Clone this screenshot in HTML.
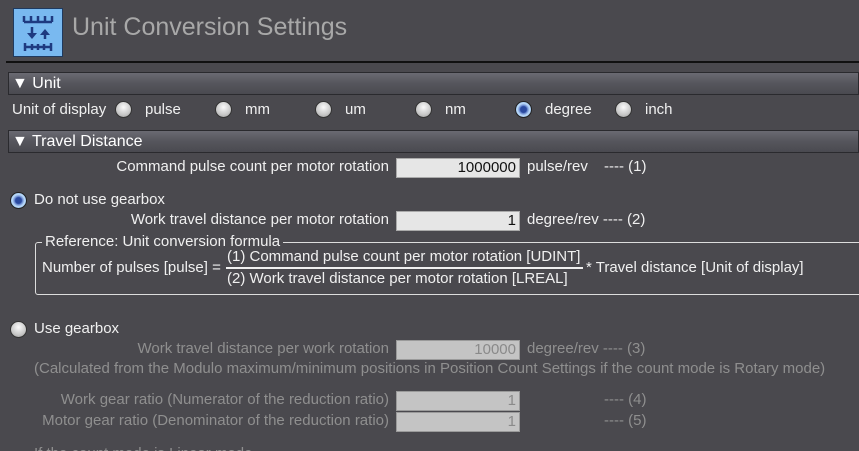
<!DOCTYPE html>
<html><head><meta charset="utf-8"><style>
*{margin:0;padding:0;box-sizing:border-box}
html,body{width:859px;height:451px;overflow:hidden}
body{background:#4a494e;font-family:"Liberation Sans",sans-serif;font-size:15px;color:#f0f0f0;position:relative}
.a{position:absolute;white-space:nowrap;line-height:18px}
.r{text-align:right}
.bar{position:absolute;left:8px;right:0;height:23px;background:linear-gradient(#6a6a72,#55555c 50%,#4a4a50);border:1px solid #2a2a2e;font-size:16px;line-height:21px;padding-left:3px;color:#fff}
.rad{position:absolute;width:17px;height:17px;border-radius:50%;background:radial-gradient(circle at 50% 35%,#fafafa,#c8c8c8 60%,#9a9a9a);border:1px solid #333}
.sel{background:radial-gradient(circle,#2a4aa0 0 3px,#6a8ad0 4px,#b8d8f8 6px,#90b8e8);border:1px solid #222}
.inp{position:absolute;left:396px;width:124px;height:20px;background:#e6e6e6;border:1px solid #aaa;text-align:right;padding-right:3px;color:#111;line-height:18px}
.dis{background:#c4c4c4;color:#8a8a8a;border-color:#9a9a9a}
.g{color:#8f8f8f}
</style></head><body>
<div style="position:absolute;left:13px;top:8px;width:50px;height:49px;background:#79b9f0;border:1px solid #1e3a60">
<svg width="48" height="47" viewBox="0 0 48 47"><g stroke="#1e3a80" stroke-width="2.5" fill="none">
<path d="M10 7v6M17 7v6M24 7v6M31 7v6M38 7v6M10 13h28"/>
<path d="M18 18v8M31 22v8M11 38h26M11 34v8M18 35v6M24 35v6M30 35v6M37 34v8"/></g>
<path d="M13 24h10l-5 6z M26 26l5-6 5 6z" fill="#1e3a80"/></svg></div>
<div class="a" style="left:72px;top:12px;font-size:25px;line-height:30px;color:#a8a8a8">Unit Conversion Settings</div>
<div style="position:absolute;left:6px;right:0;top:61px;height:2px;background:#111"></div>
<div class="bar" style="top:72px">▼ Unit</div>
<div class="a" style="left:12px;top:101px">Unit of display</div>
<div class="rad" style="left:115px;top:101px"></div><div class="a" style="left:145px;top:101px">pulse</div>
<div class="rad" style="left:215px;top:101px"></div><div class="a" style="left:245px;top:101px">mm</div>
<div class="rad" style="left:315px;top:101px"></div><div class="a" style="left:345px;top:101px">um</div>
<div class="rad" style="left:415px;top:101px"></div><div class="a" style="left:445px;top:101px">nm</div>
<div class="rad sel" style="left:515px;top:101px"></div><div class="a" style="left:545px;top:101px">degree</div>
<div class="rad" style="left:615px;top:101px"></div><div class="a" style="left:645px;top:101px">inch</div>
<div class="bar" style="top:130px">▼ Travel Distance</div>
<div class="a r" style="right:470px;top:158px">Command pulse count per motor rotation</div>
<div class="inp" style="top:158px">1000000</div>
<div class="a" style="left:527px;top:158px">pulse/rev</div><div class="a" style="left:604px;top:158px">---- (1)</div>
<div class="rad sel" style="left:10px;top:192px"></div><div class="a" style="left:34px;top:191px">Do not use gearbox</div>
<div class="a r" style="right:470px;top:211px">Work travel distance per motor rotation</div>
<div class="inp" style="top:211px">1</div>
<div class="a" style="left:527px;top:211px">degree/rev ---- (2)</div>
<div style="position:absolute;left:35px;top:242px;right:-5px;height:53px;border:1px solid #ddd;border-radius:3px"></div>
<div class="a" style="left:42px;top:233px;background:#4a494e;padding:0 3px">Reference: Unit conversion formula</div>
<div class="a" style="left:42px;top:259px">Number of pulses [pulse] =</div>
<div class="a" style="left:227px;top:248px">(1) Command pulse count per motor rotation [UDINT]</div>
<div style="position:absolute;left:226px;top:267px;width:357px;height:2px;background:#f0f0f0"></div>
<div class="a" style="left:227px;top:270px">(2) Work travel distance per motor rotation [LREAL]</div>
<div class="a" style="left:586px;top:259px">* Travel distance [Unit of display]</div>
<div class="rad" style="left:10px;top:321px"></div><div class="a" style="left:34px;top:320px">Use gearbox</div>
<div class="a r g" style="right:470px;top:340px">Work travel distance per work rotation</div>
<div class="inp dis" style="top:340px">10000</div>
<div class="a g" style="left:527px;top:340px">degree/rev ---- (3)</div>
<div class="a g" style="left:34px;top:360px">(Calculated from the Modulo maximum/minimum positions in Position Count Settings if the count mode is Rotary mode)</div>
<div class="a r g" style="right:470px;top:391px">Work gear ratio (Numerator of the reduction ratio)</div>
<div class="inp dis" style="top:391px">1</div><div class="a g" style="left:604px;top:391px">---- (4)</div>
<div class="a r g" style="right:470px;top:412px">Motor gear ratio (Denominator of the reduction ratio)</div>
<div class="inp dis" style="top:412px">1</div><div class="a g" style="left:604px;top:412px">---- (5)</div>
<div class="a g" style="left:34px;top:445px">If the count mode is Linear mode</div>
</body></html>
